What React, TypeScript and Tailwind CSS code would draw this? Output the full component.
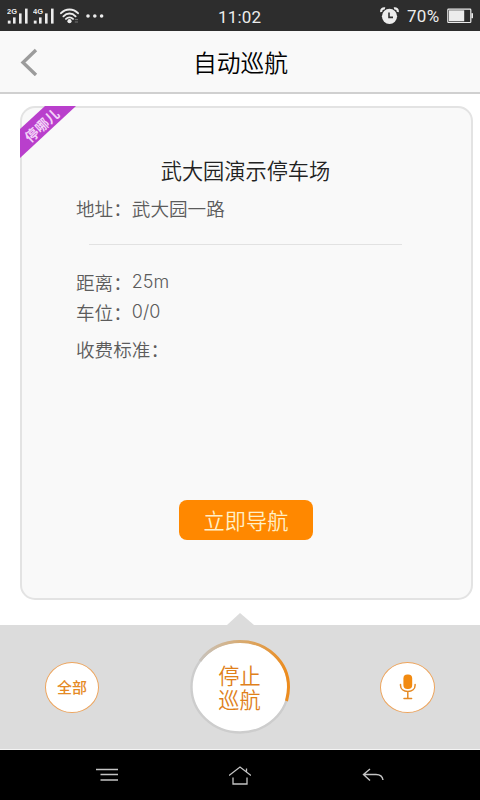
type Parking = {
  name: string;
  address: string;
  distance: string;
  spaces: string;
  price: string;
};

const parking: Parking = {
  name: "武大园演示停车场",
  address: "武大园一路",
  distance: "25m",
  spaces: "0/0",
  price: "",
};

function Signal({ label }: { label: string }) {
  return (
    <svg width="22" height="18" viewBox="0 0 22 18" fill="#ececec">
      <text x="0" y="6.8" fontSize="7.5" fontWeight="700" fontFamily="Liberation Sans, sans-serif" textLength="10" lengthAdjust="spacingAndGlyphs">
        {label}
      </text>
      <rect x="0.8" y="13.6" width="2.8" height="3" />
      <rect x="6" y="10.4" width="2.6" height="6.2" />
      <rect x="12" y="6.4" width="2.6" height="10.2" />
      <rect x="18" y="1.6" width="2.6" height="15" />
    </svg>
  );
}

function StatusBar() {
  return (
    <div className="relative flex h-[31px] items-center justify-between bg-[#2d2d2d] px-[7px] text-[#ececec]">
      <div className="flex items-center">
        <Signal label="2G" />
        <span className="w-1" />
        <Signal label="4G" />
        <svg className="ml-[5px]" width="19" height="16" viewBox="0 0 19 16" fill="none" stroke="#ececec" strokeWidth="1.9" strokeLinecap="round">
          <path d="M1 5.2C5.8.2 13.2.2 18 5.2" />
          <path d="M3.4 8.3C7 4.6 12 4.6 15.6 8.3" />
          <path d="M6 10.9C8 9.1 11 9.1 13 10.9" />
          <circle cx="9.5" cy="13.2" r="2.1" fill="#ececec" stroke="none" />
          <path d="M15.2 11.6h2.4M15.2 14h2.4" stroke="#777" strokeWidth="1" />
        </svg>
        <svg className="ml-[7px]" width="18" height="4" viewBox="0 0 18 4" fill="#ececec">
          <circle cx="2" cy="2" r="1.8" />
          <circle cx="8.8" cy="2" r="1.8" />
          <circle cx="15.6" cy="2" r="1.8" />
        </svg>
      </div>
      <span className="absolute top-[7px] left-[218px] font-['Roboto',sans-serif] text-[17px] leading-5 font-normal tracking-[0.2px]">11:02</span>
      <div className="flex items-center">
        <svg width="19" height="18" viewBox="0 0 19 18">
          <circle cx="9.5" cy="9.3" r="7.6" fill="#ececec" />
          <path d="M1.3 5A3 3 0 0 1 5 1.4M17.7 5A3 3 0 0 0 14 1.4" fill="none" stroke="#ececec" strokeWidth="2.2" />
          <path d="M9 5.4v5h4" fill="none" stroke="#333" strokeWidth="1.6" />
        </svg>
        <span className="ml-2 w-[34px] whitespace-nowrap font-['Roboto',sans-serif] text-[17px] leading-5 font-normal tracking-[0.3px]">70%</span>
        <svg className="ml-[6px]" width="26" height="16" viewBox="0 0 26 16">
          <rect x=".8" y="1.1" width="23" height="13.4" rx=".8" fill="none" stroke="#ececec" strokeWidth="1.2" />
          <rect x="2" y="2.3" width="15.2" height="11" fill="#ececec" />
          <rect x="24.4" y="5.2" width="1.6" height="5" fill="#ececec" />
        </svg>
      </div>
    </div>
  );
}

function Header() {
  return (
    <div className="flex h-[63px] items-center border-b-2 border-[#d0d0d0] bg-[#f9f9f9]">
      <button className="w-12 pl-5" aria-label="返回">
        <svg width="18" height="28" viewBox="0 0 18 28" fill="none" stroke="#9c9c9c" strokeWidth="3.4">
          <path d="M16 2L3 14.5 16 27" />
        </svg>
      </button>
      <h1 className="flex-1 pr-[47px] pt-px text-center text-[23.8px] leading-8 text-black">自动巡航</h1>
    </div>
  );
}

function ParkingCard({ parking }: { parking: Parking }) {
  return (
    <div className="relative mt-3 mr-[7px] ml-5 flex h-[494px] flex-col rounded-[15px] border-2 border-[#e3e3e3] bg-[#f9f9f9] text-[18.6px] text-[#5c5c5c]">
      <svg className="absolute -top-0.5 -left-0.5 overflow-visible" width="57" height="53" viewBox="0 0 57 53">
        <path d="M0 23L25 0H56L0 52Z" fill="#b93fcc" />
        <text x="22" y="24.6" fontSize="13.6" fontWeight="700" textAnchor="middle" fill="#f3d3f8" transform="rotate(-43 22 19.5)">
          停哪儿
        </text>
      </svg>

      <h2 className="mt-[46px] pr-0.5 text-center text-[21.2px] leading-8 text-[#222]">{parking.name}</h2>
      <p className="mt-[7px] pl-[54px] leading-[30px]">地址：{parking.address}</p>
      <div className="mt-[21px] mr-[69px] ml-[67px] h-px shrink-0 bg-[#e2e2e2]" />
      <div className="mt-[22px] pl-[54px] leading-[30px]">
        <p className="flex h-[30px]">
          距离：<span className="font-['Inter',sans-serif] text-[18px]">{parking.distance}</span>
        </p>
        <p className="flex h-[30px]">
          车位：<span className="font-['Inter',sans-serif] text-[18px]">{parking.spaces}</span>
        </p>
        <p className="mt-[7px]">收费标准：{parking.price}</p>
      </div>
      <button className="mt-auto mb-[58px] ml-[157px] h-10 w-[134px] rounded-lg bg-[#ff8800] text-[21.2px] leading-none text-[#fff0c8]">
        立即导航
      </button>
    </div>
  );
}

function BottomBar() {
  return (
    <div className="relative mt-[25px] flex h-[124px] items-center justify-between bg-[#dcdcdc] px-[45px]">
      <svg className="absolute -top-3 left-[227px]" width="27" height="12" viewBox="0 0 27 12">
        <path d="M0 12L13 0 27 12Z" fill="#dcdcdc" />
      </svg>
      <button className="flex h-[51px] w-[54px] items-center justify-center rounded-[50%] border border-[#eda45c] bg-white text-[15px] font-medium text-[#e58a25]">
        全部
      </button>
      <button className="relative h-[94px] w-[100px] text-[21.2px] text-[#e0801a]">
        <svg className="absolute inset-0" width="100" height="94" viewBox="0 0 100 94" fill="none">
          <defs>
            <linearGradient id="ring" x1="0" y1="0" x2="1" y2="0">
              <stop offset="0" stopColor="#c8c3bd" />
              <stop offset=".5" stopColor="#d9a96c" />
              <stop offset="1" stopColor="#ed8b1c" />
            </linearGradient>
          </defs>
          <ellipse cx="50" cy="47" rx="48.5" ry="45.5" fill="#fff" stroke="#cdcdcd" strokeWidth="2.4" />
          <path d="M10 21C19 8 34 1.5 50 1.5C77 1.5 98.5 22 98.5 47C98.5 52.5 97.8 56 96.5 61" stroke="url(#ring)" strokeWidth="3" />
        </svg>
        <span className="relative flex flex-col leading-6">
          <span>停止</span>
          <span>巡航</span>
        </span>
      </button>
      <button className="flex h-[51px] w-[55px] items-center justify-center rounded-[50%] border border-[#eda45c] bg-white" aria-label="语音">
        <svg width="18" height="26" viewBox="0 0 18 26" fill="none">
          <rect x="4.4" y="0.5" width="8.8" height="14.6" rx="4" fill="#f28a10" />
          <path d="M1.5 10.5v.8C1.5 15 4.5 17.4 8.8 17.4s7.3-2.4 7.3-6.1v-.8M8.8 17.5v7M5 24.5h7.6" stroke="#e58a25" strokeWidth="1.5" strokeLinecap="round" />
        </svg>
      </button>
    </div>
  );
}

function NavBar() {
  return (
    <div className="flex h-[51px] items-center justify-between border-t border-[#f4f4f4] bg-black px-24">
      <svg width="22" height="14" viewBox="0 0 22 14" stroke="#c4c4c4" strokeWidth="1.3">
        <path d="M0 1.5h22M4.5 6.5H22M4.5 12H22" />
      </svg>
      <svg width="22" height="19" viewBox="0 0 22 19" fill="none" stroke="#c4c4c4" strokeWidth="1.3">
        <path d="M0 9.6L11 1l11 8.6M4 11.5v6.5h14v-6.5M17.5 6V2.5" />
      </svg>
      <svg width="22" height="14" viewBox="0 0 22 14" fill="none" stroke="#c4c4c4" strokeWidth="1.4">
        <path d="M8 1L1.5 6.5 8 12.5M1.5 6.5H14C18 6.5 20.5 8.5 21 12" />
      </svg>
    </div>
  );
}

export default function App() {
  return (
    <div className="flex h-[800px] w-[480px] flex-col overflow-hidden bg-white font-['Noto_Sans_CJK_SC',sans-serif] font-[350]">
      <StatusBar />
      <Header />
      <ParkingCard parking={parking} />
      <BottomBar />
      <NavBar />
    </div>
  );
}
